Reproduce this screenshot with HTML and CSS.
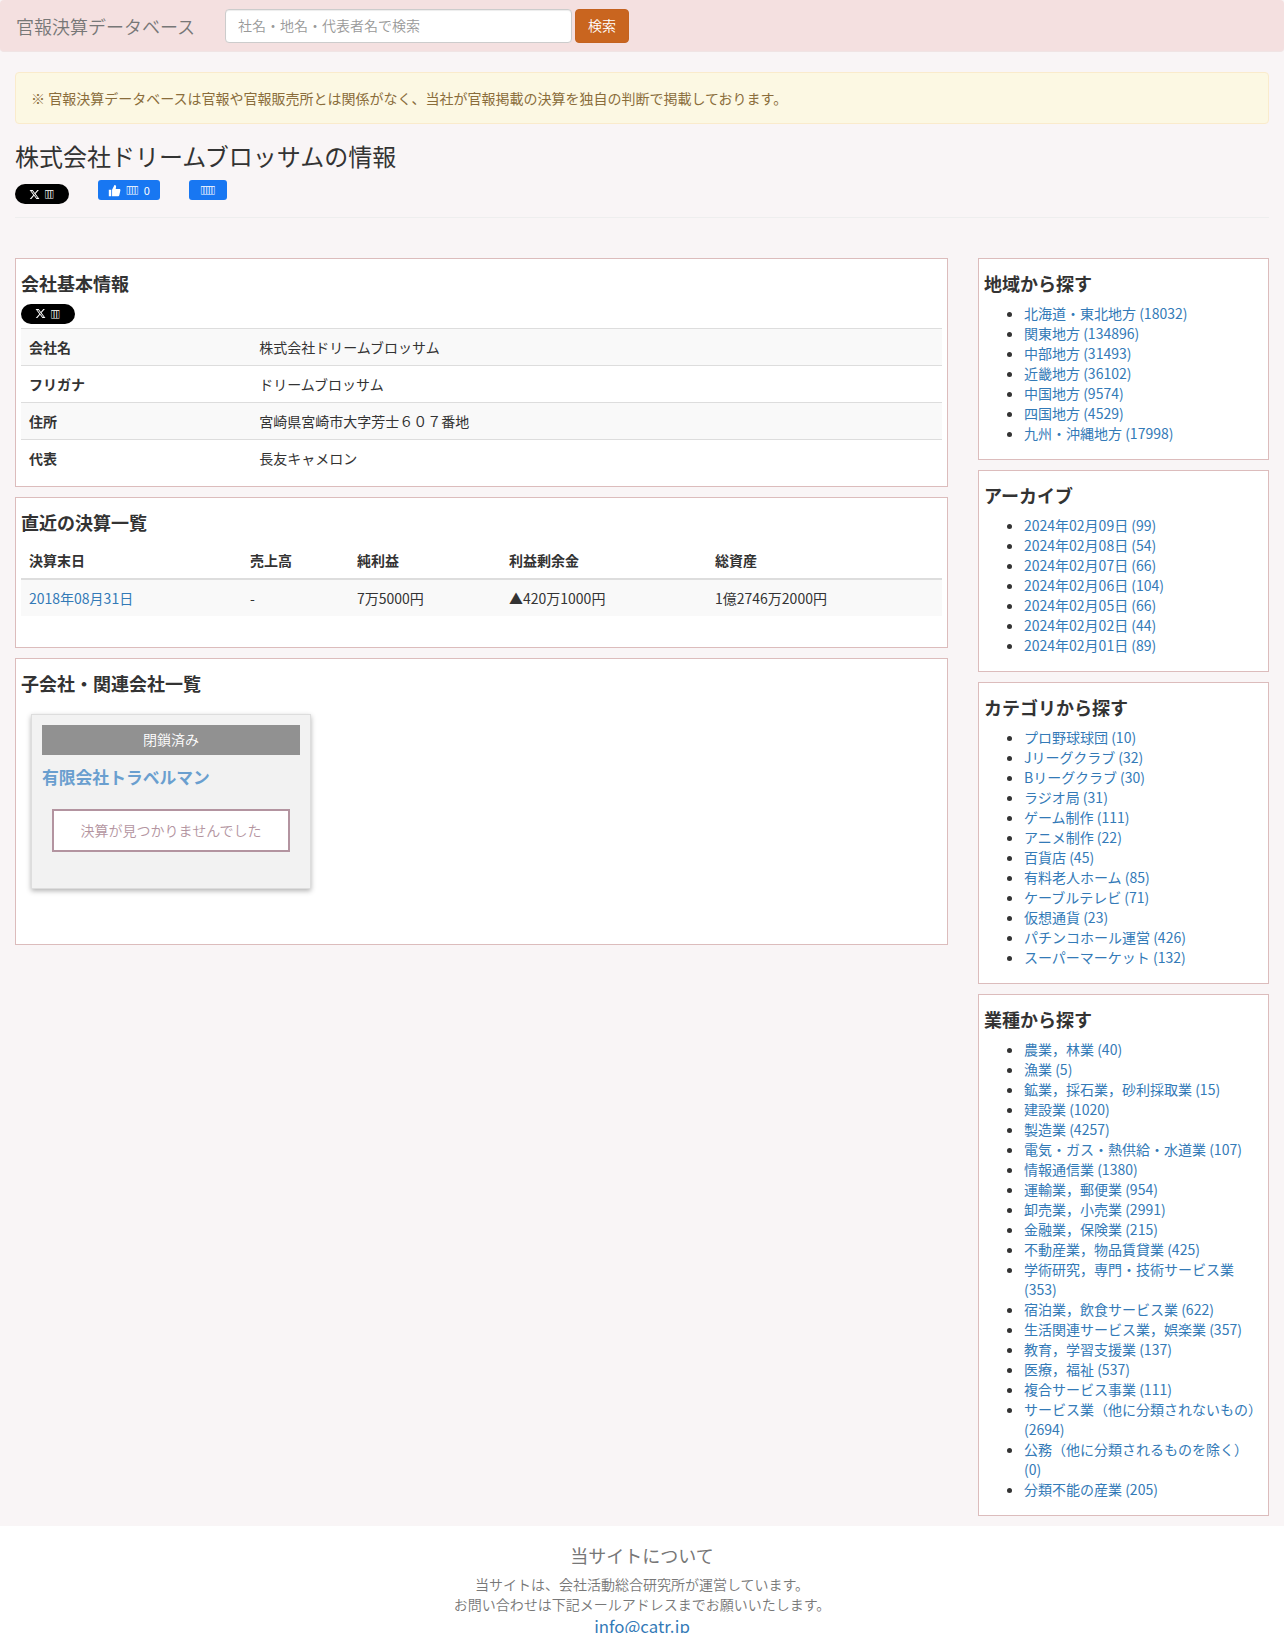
FILE: index.html
```html
<!DOCTYPE html>
<html lang="ja">
<head>
<meta charset="utf-8">
<title>株式会社ドリームブロッサムの情報</title>
<link rel="stylesheet" href="styles.css">
</head>
<body>
<nav class="navbar">
  <a class="brand" href="#">官報決算データベース</a>
  <form class="search">
    <input class="search-input" type="text" placeholder="社名・地名・代表者名で検索">
    <button class="search-btn" type="button">検索</button>
  </form>
</nav>
<div class="container">
  <div class="alert">※ 官報決算データベースは官報や官報販売所とは関係がなく、当社が官報掲載の決算を独自の判断で掲載しております。</div>
  <header class="page-header">
    <h1>株式会社ドリームブロッサムの情報</h1>
    <div class="social">
      <a class="x-btn x-btn-low" href="#"><svg class="x-icon" viewBox="0 0 24 24"><path fill="#fff" d="M18.24 2.25h3.31l-7.23 8.26 8.5 11.24h-6.66l-5.21-6.82-5.97 6.82H1.68l7.73-8.84L1.25 2.25h6.83l4.71 6.23zm-1.16 17.52h1.83L7.08 4.13H5.12z"/></svg><span class="tofu">▯▯▯</span></a>
      <a class="fb-btn" href="#"><svg class="fb-icon" viewBox="0 0 16 16"><path fill="#fff" d="M1 7h3v8H1zM5 7.2 8 1.2c1.2 0 2 .8 2 2L9.5 6H14c.9 0 1.5.8 1.3 1.6l-1.4 6.2c-.2.7-.7 1.2-1.4 1.2H5z"/></svg><span class="tofu">▯▯▯▯</span> 0</a>
      <a class="fb-btn fb-share" href="#"><span class="tofu">▯▯▯▯▯</span></a>
    </div>
  </header>
  <div class="columns">
    <main class="main">
      <section class="panel">
        <h3>会社基本情報</h3>
        <div class="tweet-row"><a class="x-btn" href="#"><svg class="x-icon" viewBox="0 0 24 24"><path fill="#fff" d="M18.24 2.25h3.31l-7.23 8.26 8.5 11.24h-6.66l-5.21-6.82-5.97 6.82H1.68l7.73-8.84L1.25 2.25h6.83l4.71 6.23zm-1.16 17.52h1.83L7.08 4.13H5.12z"/></svg><span class="tofu">▯▯▯</span></a></div>
        <table class="table info">
          <tbody>
            <tr><th>会社名</th><td>株式会社ドリームブロッサム</td></tr>
            <tr><th>フリガナ</th><td>ドリームブロッサム</td></tr>
            <tr><th>住所</th><td>宮崎県宮崎市大字芳士６０７番地</td></tr>
            <tr><th>代表</th><td>長友キャメロン</td></tr>
          </tbody>
        </table>
      </section>
      <section class="panel panel-finance">
        <h3>直近の決算一覧</h3>
        <table class="table finance">
          <thead>
            <tr><th class="c1">決算末日</th><th class="c2">売上高</th><th class="c3">純利益</th><th class="c4">利益剰余金</th><th>総資産</th></tr>
          </thead>
          <tbody>
            <tr><td><a href="#">2018年08月31日</a></td><td>-</td><td>7万5000円</td><td>▲420万1000円</td><td>1億2746万2000円</td></tr>
          </tbody>
        </table>
      </section>
      <section class="panel panel-related">
        <h3>子会社・関連会社一覧</h3>
        <div class="card">
          <div class="card-status">閉鎖済み</div>
          <a class="card-name" href="#">有限会社トラベルマン</a>
          <div class="card-empty">決算が見つかりませんでした</div>
        </div>
      </section>
    </main>
    <aside class="side">
      <section class="panel">
        <h3>地域から探す</h3>
        <ul>
          <li><a href="#">北海道・東北地方 (18032)</a></li>
          <li><a href="#">関東地方 (134896)</a></li>
          <li><a href="#">中部地方 (31493)</a></li>
          <li><a href="#">近畿地方 (36102)</a></li>
          <li><a href="#">中国地方 (9574)</a></li>
          <li><a href="#">四国地方 (4529)</a></li>
          <li><a href="#">九州・沖縄地方 (17998)</a></li>
        </ul>
      </section>
      <section class="panel">
        <h3>アーカイブ</h3>
        <ul>
          <li><a href="#">2024年02月09日 (99)</a></li>
          <li><a href="#">2024年02月08日 (54)</a></li>
          <li><a href="#">2024年02月07日 (66)</a></li>
          <li><a href="#">2024年02月06日 (104)</a></li>
          <li><a href="#">2024年02月05日 (66)</a></li>
          <li><a href="#">2024年02月02日 (44)</a></li>
          <li><a href="#">2024年02月01日 (89)</a></li>
        </ul>
      </section>
      <section class="panel">
        <h3>カテゴリから探す</h3>
        <ul>
          <li><a href="#">プロ野球球団 (10)</a></li>
          <li><a href="#">Jリーグクラブ (32)</a></li>
          <li><a href="#">Bリーグクラブ (30)</a></li>
          <li><a href="#">ラジオ局 (31)</a></li>
          <li><a href="#">ゲーム制作 (111)</a></li>
          <li><a href="#">アニメ制作 (22)</a></li>
          <li><a href="#">百貨店 (45)</a></li>
          <li><a href="#">有料老人ホーム (85)</a></li>
          <li><a href="#">ケーブルテレビ (71)</a></li>
          <li><a href="#">仮想通貨 (23)</a></li>
          <li><a href="#">パチンコホール運営 (426)</a></li>
          <li><a href="#">スーパーマーケット (132)</a></li>
        </ul>
      </section>
      <section class="panel">
        <h3>業種から探す</h3>
        <ul>
          <li><a href="#">農業，林業 (40)</a></li>
          <li><a href="#">漁業 (5)</a></li>
          <li><a href="#">鉱業，採石業，砂利採取業 (15)</a></li>
          <li><a href="#">建設業 (1020)</a></li>
          <li><a href="#">製造業 (4257)</a></li>
          <li><a href="#">電気・ガス・熱供給・水道業 (107)</a></li>
          <li><a href="#">情報通信業 (1380)</a></li>
          <li><a href="#">運輸業，郵便業 (954)</a></li>
          <li><a href="#">卸売業，小売業 (2991)</a></li>
          <li><a href="#">金融業，保険業 (215)</a></li>
          <li><a href="#">不動産業，物品賃貸業 (425)</a></li>
          <li><a href="#">学術研究，専門・技術サービス業 (353)</a></li>
          <li><a href="#">宿泊業，飲食サービス業 (622)</a></li>
          <li><a href="#">生活関連サービス業，娯楽業 (357)</a></li>
          <li><a href="#">教育，学習支援業 (137)</a></li>
          <li><a href="#">医療，福祉 (537)</a></li>
          <li><a href="#">複合サービス事業 (111)</a></li>
          <li><a href="#">サービス業（他に分類されないもの） (2694)</a></li>
          <li><a href="#">公務（他に分類されるものを除く） (0)</a></li>
          <li><a href="#">分類不能の産業 (205)</a></li>
        </ul>
      </section>
    </aside>
  </div>
</div>
<footer class="footer">
  <h4>当サイトについて</h4>
  <p>当サイトは、会社活動総合研究所が運営しています。<br>お問い合わせは下記メールアドレスまでお願いいたします。</p>
  <a class="mail" href="#">info@catr.jp</a>
</footer>
</body>
</html>
```
FILE: styles.css
```css
* { box-sizing: border-box; }
html, body { margin: 0; padding: 0; }
html { overflow: hidden; height: 1633px; }
body {
  background: #f9f5f6;
  color: #333;
  font-family: "Noto Sans CJK JP", "Noto Sans", sans-serif;
  font-size: 14px;
  line-height: 20px;
}
a { color: #337ab7; text-decoration: none; }

.navbar {
  display: flex;
  align-items: flex-start;
  height: 52px;
  background: #f4e0e0;
  border-bottom: 1px solid #f0e4e4;
  border-radius: 4px;
  margin-bottom: 20px;
}
.brand {
  color: #777;
  font-size: 18px;
  font-weight: 350;
  line-height: 20px;
  padding: 16px 15px 15px 16px;
  width: 225px;
  flex: none;
  white-space: nowrap;
}
.search { display: flex; gap: 3px; padding-top: 9px; }
.search-input {
  width: 347px;
  height: 34px;
  padding: 4px 12px 6px;
  border: 1px solid #ccc;
  border-radius: 4px;
  background: #fff;
  font: inherit;
  font-weight: 350;
  color: #555;
  box-shadow: inset 0 1px 1px rgba(0,0,0,.075);
}
.search-input::placeholder { color: #999; opacity: 1; }
.search-btn {
  width: 54px;
  height: 34px;
  padding: 0 0 2px;
  border: 1px solid #c4621f;
  border-radius: 4px;
  background: #c9651f;
  color: #fff;
  font: inherit;
  font-weight: 350;
}

.container { padding: 0 15px; }
.alert {
  height: 52px;
  padding: 15px;
  background: #fcf8e3;
  border: 1px solid #faebcc;
  border-radius: 4px;
  color: #8a6d3b;
  margin-bottom: 20px;
}
.page-header {
  border-bottom: 1px solid #eee;
  height: 74px;
  margin-bottom: 40px;
}
h1 {
  margin: 0 0 12px;
  font-size: 24px;
  line-height: 24px;
  font-weight: 400;
}
.social { display: flex; align-items: flex-start; }
.x-btn {
  display: inline-flex;
  align-items: center;
  justify-content: center;
  gap: 4px;
  width: 54px;
  height: 20px;
  background: #000;
  color: #fff;
  border-radius: 10px;
  font-size: 11px;
  line-height: 20px;
}
.x-btn-low { margin: 4px 29px 0 0; }
.x-icon { width: 11px; height: 11px; }
.tofu {
  display: inline-block;
  font-family: "DejaVu Sans", sans-serif;
  font-size: 8px;
  letter-spacing: -1.7px;
  padding-right: 2px;
  transform: scaleY(1.4);
}
.fb-btn {
  display: inline-flex;
  align-items: center;
  justify-content: center;
  gap: 5px;
  height: 20px;
  width: 62px;
  background: #1877f2;
  color: #fff;
  border-radius: 3px;
  font-size: 11px;
  margin-right: 29px;
}
.fb-share { width: 38px; }
.fb-icon { width: 13px; height: 13px; }

.columns { display: flex; gap: 30px; }
.main { flex: 0 0 933px; min-width: 0; }
.side { flex: 0 0 291px; min-width: 0; }

.panel {
  background: #fff;
  border: 1px solid #dcbcbc;
  padding: 5px;
  margin-bottom: 10px;
}
.panel h3 {
  margin: 9px 0 10px;
  font-size: 18px;
  line-height: 20px;
  font-weight: 700;
}
.tweet-row { height: 25px; }

.table { width: 100%; border-collapse: collapse; margin-bottom: 26px; }
.table th, .table td {
  padding: 8px;
  text-align: left;
  vertical-align: top;
  border-top: 1px solid #ddd;
  font-weight: 400;
}
.table th { font-weight: 700; }
.table tbody tr:nth-child(odd) { background: #f9f9f9; }
.info { margin-bottom: 5px; table-layout: fixed; }
.info th { width: 25%; }
.finance { table-layout: fixed; }
.finance thead th { border-top: 0; border-bottom: 2px solid #ddd; }
.finance tbody td { border-top: 0; }
.finance .c1 { width: 221px; }
.finance .c2 { width: 107px; }
.finance .c3 { width: 152px; }
.finance .c4 { width: 206px; }

.panel-related { height: 287px; }
.card {
  width: 280px;
  height: 175px;
  margin: 21px 0 0 10px;
  padding: 10px;
  background: #f2f2f2;
  border: 1px solid #ddd;
  box-shadow: 0 2px 5px rgba(0,0,0,.3);
}
.card-status {
  background: #919191;
  color: #fff;
  font-weight: 350;
  text-align: center;
  line-height: 28px;
  height: 30px;
}
.card-name {
  display: block;
  margin: 12px 0 22px;
  color: #6a9fcf;
  font-size: 16.8px;
  line-height: 20px;
  font-weight: 700;
}
.card-empty {
  margin: 0 10px;
  height: 43px;
  line-height: 39px;
  border: 2px solid #b394a0;
  background: #fff;
  color: #b394a0;
  font-weight: 350;
  text-align: center;
}

ul { margin: 0 0 10px; padding-left: 40px; }
.panel ul { margin-bottom: 11px; }

.footer {
  background: #fff;
  color: #777;
  text-align: center;
  padding-top: 19px;
}
.footer h4 {
  margin: 0 0 9px;
  font-size: 18px;
  line-height: 20px;
  font-weight: 400;
}
.footer p { margin: 0; font-weight: 350; }
.mail { font-size: 16.8px; line-height: 24px; }
```
